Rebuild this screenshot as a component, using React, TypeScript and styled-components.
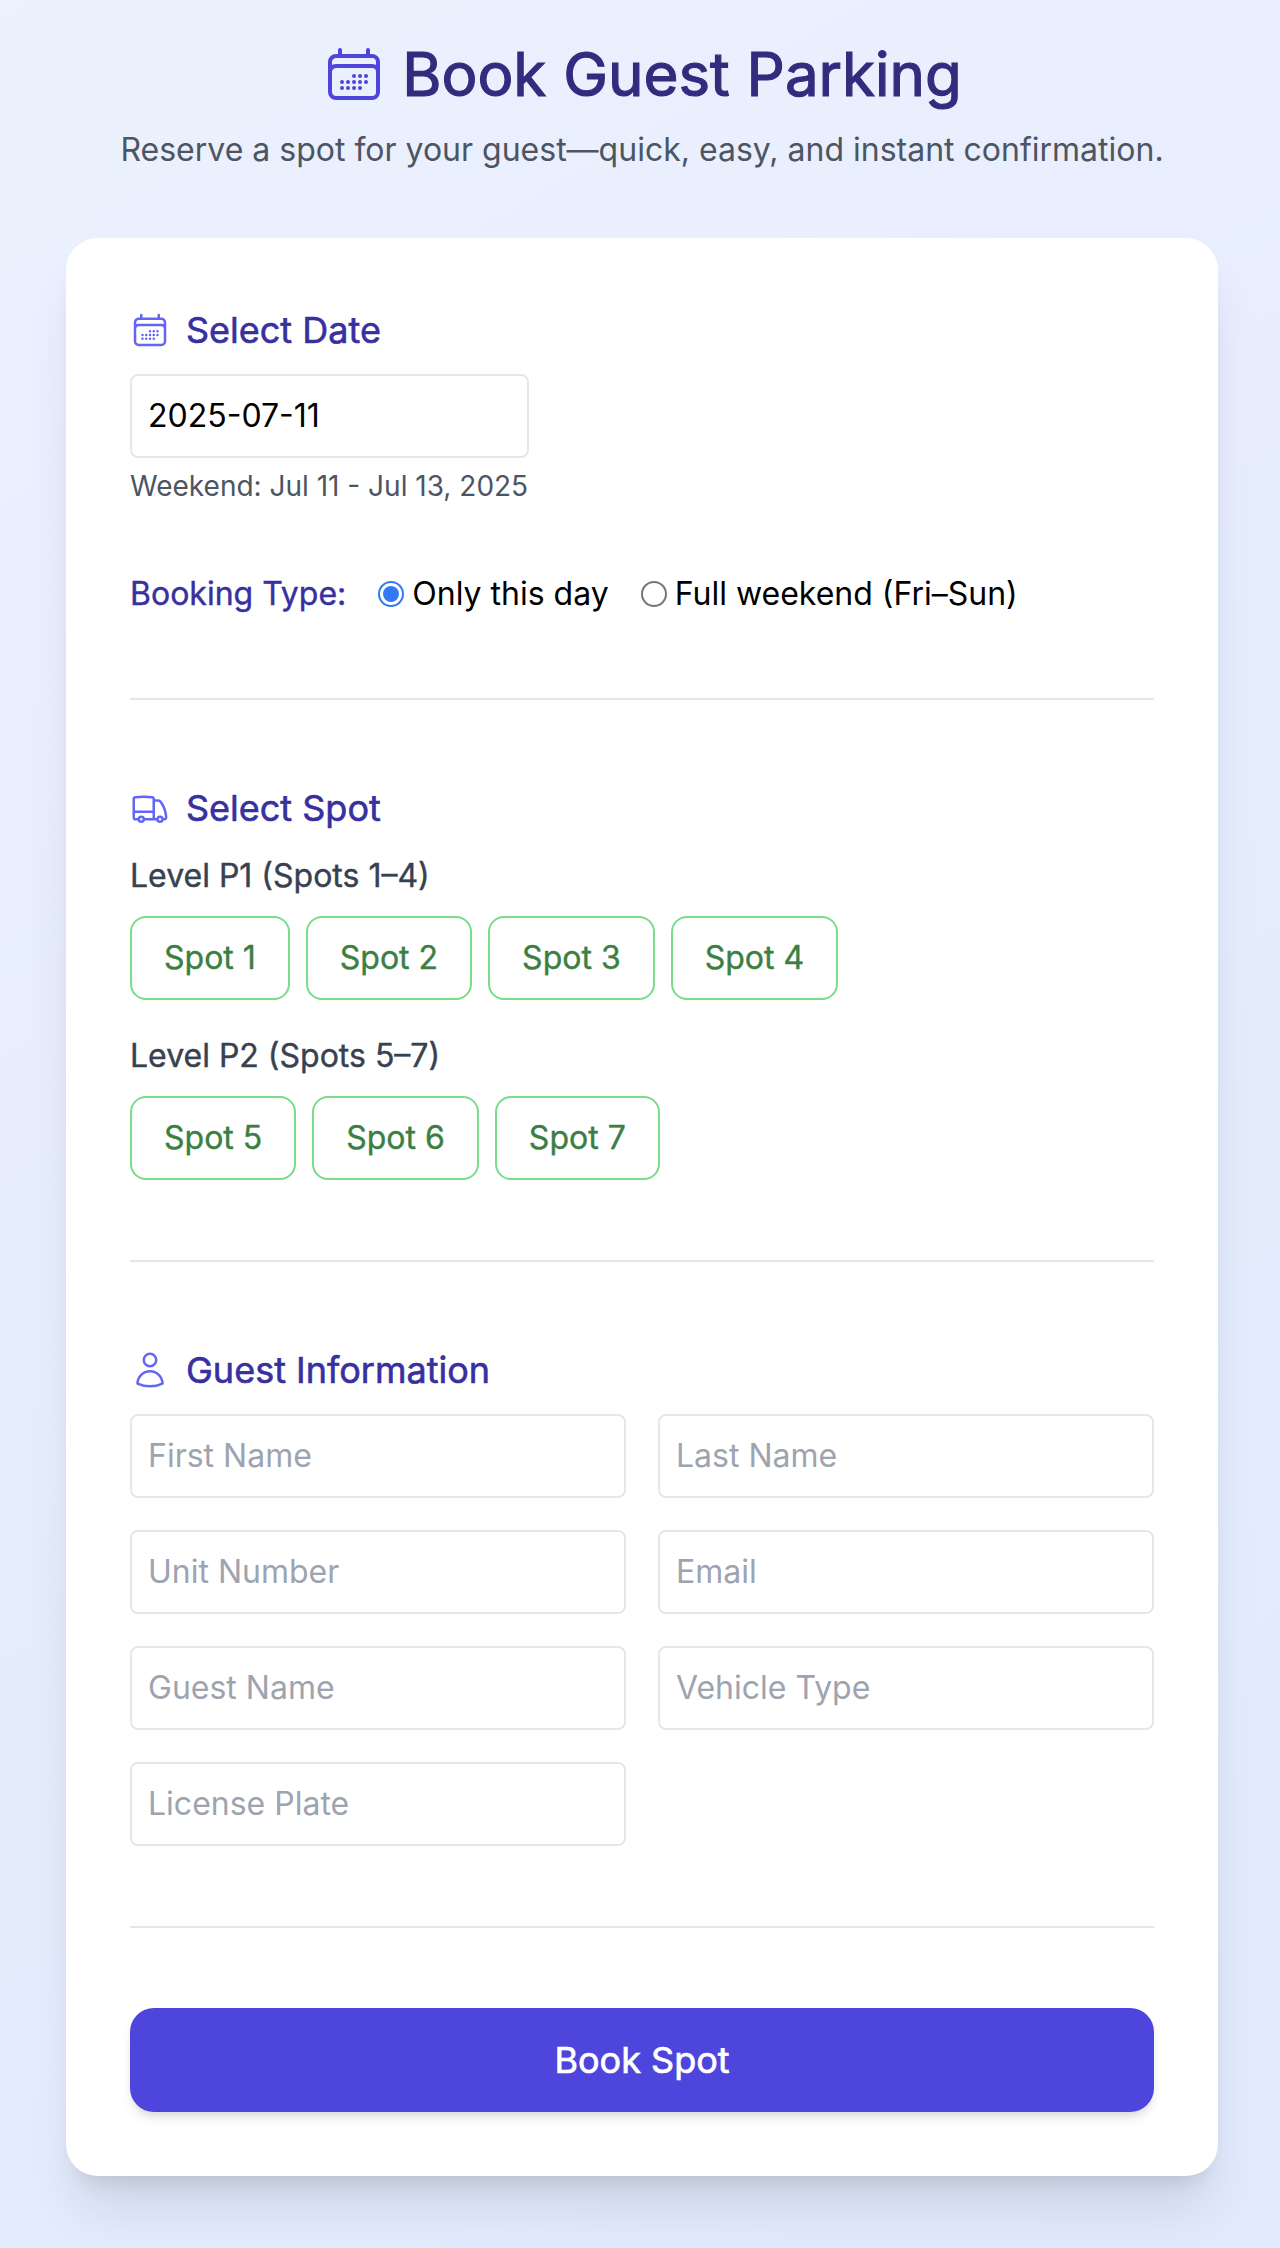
import React, { useState } from "react";
import styled, { createGlobalStyle, css } from "styled-components";

const GlobalStyle = createGlobalStyle`
  *, *::before, *::after { box-sizing: border-box; }
  body {
    margin: 0;
    font-family: Inter, "Liberation Sans", sans-serif;
    font-size: 32px;
    line-height: 48px;
    color: #000;
    -webkit-font-smoothing: antialiased;
  }
  h1, h2, p { margin: 0; }
  input, button { font: inherit; color: inherit; margin: 0; }
`;

const emphasis = css`
  font-weight: 400;
  -webkit-text-stroke: 0.4px currentColor;
`;

const Page = styled.main`
  min-height: 2248px;
  padding: 38px 62px 72px 66px;
  background: linear-gradient(150deg, #ecf1fe, #e8eefd 30%, #e0eafc);
`;

const Header = styled.header`
  display: flex;
  flex-direction: column;
  align-items: center;
  gap: 16px;
  margin-bottom: 64px;
`;

const Title = styled.h1`
  ${emphasis}
  -webkit-text-stroke-width: 1.2px;
  display: flex;
  align-items: center;
  gap: 16px;
  font-size: 60px;
  line-height: 72px;
  color: #312c7d;
  white-space: nowrap;
`;

const Subtitle = styled.p`
  color: #4d5562;
  white-space: nowrap;
`;

const Card = styled.form`
  display: flex;
  flex-direction: column;
  padding: 64px;
  border-radius: 32px;
  background: #fff;
  box-shadow: 0 40px 50px -10px rgba(0, 0, 0, 0.1), 0 16px 20px -12px rgba(0, 0, 0, 0.1);
`;

const Section = styled.section`
  padding-bottom: 80px;
  margin-bottom: 80px;
  border-bottom: 2px solid #e5e6eb;
`;

const SectionTitle = styled.h2`
  ${emphasis}
  -webkit-text-stroke-width: 0.6px;
  display: flex;
  align-items: center;
  gap: 16px;
  margin-bottom: 16px;
  font-size: 36px;
  line-height: 56px;
  color: #37309f;
`;

const Icon = styled.svg<{ $size: number; $color: string }>`
  flex: none;
  width: ${(p) => p.$size}px;
  height: ${(p) => p.$size}px;
  color: ${(p) => p.$color};
  fill: none;
  stroke: currentColor;
  stroke-width: 1.5;
  stroke-linecap: round;
  stroke-linejoin: round;
`;

const Field = styled.input<{ $width?: string }>`
  display: block;
  width: ${(p) => p.$width ?? "100%"};
  height: 84px;
  padding: 15px 16px 17px;
  border: 2px solid #e5e6eb;
  border-radius: 8px;
  background: #fff;
  outline: none;
  &::placeholder { color: #9ea4af; opacity: 1; }
`;

const Hint = styled.p`
  margin-top: 8px;
  font-size: 28px;
  line-height: 40px;
  color: #4d5562;
`;

const BookingRow = styled.div`
  display: flex;
  align-items: center;
  gap: 32px;
  margin-top: 64px;
  white-space: nowrap;
`;

const BookingLabel = styled.span`
  ${emphasis}
  color: #37309f;
`;

const Option = styled.label`
  display: flex;
  align-items: center;
  gap: 8px;
`;

const Radio = styled.input`
  appearance: none;
  flex: none;
  display: grid;
  place-items: center;
  width: 26px;
  height: 26px;
  border: 2px solid #767676;
  border-radius: 50%;
  background: #fff;
  &:checked { border-color: #3478f6; }
  &:checked::before {
    content: "";
    width: 16px;
    height: 16px;
    border-radius: 50%;
    background: #3478f6;
  }
`;

const Level = styled.div`
  & + & { margin-top: 32px; }
`;

const LevelName = styled.p`
  ${emphasis}
  margin-bottom: 16px;
  color: #384150;
`;

const SpotList = styled.div`
  display: flex;
  gap: 16px;
`;

const SpotButton = styled.button`
  ${emphasis}
  padding: 16px 32px;
  border: 2px solid #78dc8b;
  border-radius: 16px;
  background: #fff;
  color: #3b7f43;
`;

const FieldGrid = styled.div`
  display: grid;
  grid-template-columns: 1fr 1fr;
  gap: 32px;
`;

const Submit = styled.button`
  ${emphasis}
  -webkit-text-stroke-width: 0.7px;
  height: 104px;
  border: 0;
  border-radius: 24px;
  background: #4e45dc;
  font-size: 36px;
  line-height: 56px;
  color: #fff;
  box-shadow: 0 8px 12px -2px rgba(0, 0, 0, 0.1), 0 4px 8px -4px rgba(0, 0, 0, 0.1);
`;

type IconProps = { size?: number; color?: string };

const CalendarIcon = ({ size = 40, color = "#6366f1" }: IconProps) => (
  <Icon viewBox="0 0 24 24" $size={size} $color={color}>
    <path d="M6.75 3v2.25M17.25 3v2.25M3 18.75V7.5a2.25 2.25 0 0 1 2.25-2.25h13.5A2.25 2.25 0 0 1 21 7.5v11.25m-18 0A2.25 2.25 0 0 0 5.25 21h13.5A2.25 2.25 0 0 0 21 18.75m-18 0v-7.5A2.25 2.25 0 0 1 5.25 9h13.5A2.25 2.25 0 0 1 21 11.25v7.5m-9-6h.008v.008H12v-.008ZM12 15h.008v.008H12V15Zm0 2.25h.008v.008H12v-.008ZM9.75 15h.008v.008H9.75V15Zm0 2.25h.008v.008H9.75v-.008ZM7.5 15h.008v.008H7.5V15Zm0 2.25h.008v.008H7.5v-.008Zm6.75-4.5h.008v.008h-.008v-.008Zm0 2.25h.008v.008h-.008V15Zm0 2.25h.008v.008h-.008v-.008Zm2.25-4.5h.008v.008H16.5v-.008Zm0 2.25h.008v.008H16.5V15Z" />
  </Icon>
);

const TruckIcon = ({ size = 40, color = "#6366f1" }: IconProps) => (
  <Icon viewBox="0 0 24 24" $size={size} $color={color}>
    <path d="M8.25 18.75a1.5 1.5 0 0 1-3 0m3 0a1.5 1.5 0 0 0-3 0m3 0h6m-9 0H3.375a1.125 1.125 0 0 1-1.125-1.125V14.25m17.25 4.5a1.5 1.5 0 0 1-3 0m3 0a1.5 1.5 0 0 0-3 0m3 0h1.125c.621 0 1.129-.504 1.09-1.124a17.902 17.902 0 0 0-3.213-9.193 2.056 2.056 0 0 0-1.58-.86H14.25M16.5 18.75h-2.25m0-11.177v-.958c0-.568-.422-1.048-.987-1.106a48.554 48.554 0 0 0-10.026 0 1.106 1.106 0 0 0-.987 1.106v7.635m12-6.677v6.677m0 4.5v-4.5m0 0h-12" />
  </Icon>
);

const UserIcon = ({ size = 40, color = "#6366f1" }: IconProps) => (
  <Icon viewBox="0 0 24 24" $size={size} $color={color}>
    <path d="M15.75 6a3.75 3.75 0 1 1-7.5 0 3.75 3.75 0 0 1 7.5 0ZM4.501 20.118a7.5 7.5 0 0 1 14.998 0A17.933 17.933 0 0 1 12 21.75c-2.676 0-5.216-.584-7.499-1.632Z" />
  </Icon>
);

const levels = [
  { name: "Level P1 (Spots 1–4)", spots: [1, 2, 3, 4] },
  { name: "Level P2 (Spots 5–7)", spots: [5, 6, 7] },
];

const guestFields = [
  "First Name",
  "Last Name",
  "Unit Number",
  "Email",
  "Guest Name",
  "Vehicle Type",
  "License Plate",
];

export default function App() {
  const [date, setDate] = useState("2025-07-11");
  const [type, setType] = useState("day");

  return (
    <>
      <GlobalStyle />
      <Page>
        <Header>
          <Title>
            <CalendarIcon size={64} color="#4e45dc" />
            Book Guest Parking
          </Title>
          <Subtitle>Reserve a spot for your guest—quick, easy, and instant confirmation.</Subtitle>
        </Header>
        <Card onSubmit={(e) => e.preventDefault()}>
          <Section>
            <SectionTitle>
              <CalendarIcon />
              Select Date
            </SectionTitle>
            <Field $width="399px" value={date} onChange={(e) => setDate(e.target.value)} />
            <Hint>Weekend: Jul 11 - Jul 13, 2025</Hint>
            <BookingRow>
              <BookingLabel>Booking Type:</BookingLabel>
              <Option>
                <Radio type="radio" name="type" checked={type === "day"} onChange={() => setType("day")} />
                Only this day
              </Option>
              <Option>
                <Radio type="radio" name="type" checked={type === "weekend"} onChange={() => setType("weekend")} />
                Full weekend (Fri–Sun)
              </Option>
            </BookingRow>
          </Section>
          <Section>
            <SectionTitle>
              <TruckIcon />
              Select Spot
            </SectionTitle>
            {levels.map((level) => (
              <Level key={level.name}>
                <LevelName>{level.name}</LevelName>
                <SpotList>
                  {level.spots.map((n) => (
                    <SpotButton key={n} type="button">Spot {n}</SpotButton>
                  ))}
                </SpotList>
              </Level>
            ))}
          </Section>
          <Section>
            <SectionTitle>
              <UserIcon />
              Guest Information
            </SectionTitle>
            <FieldGrid>
              {guestFields.map((name) => (
                <Field key={name} placeholder={name} />
              ))}
            </FieldGrid>
          </Section>
          <Submit type="submit">Book Spot</Submit>
        </Card>
      </Page>
    </>
  );
}
